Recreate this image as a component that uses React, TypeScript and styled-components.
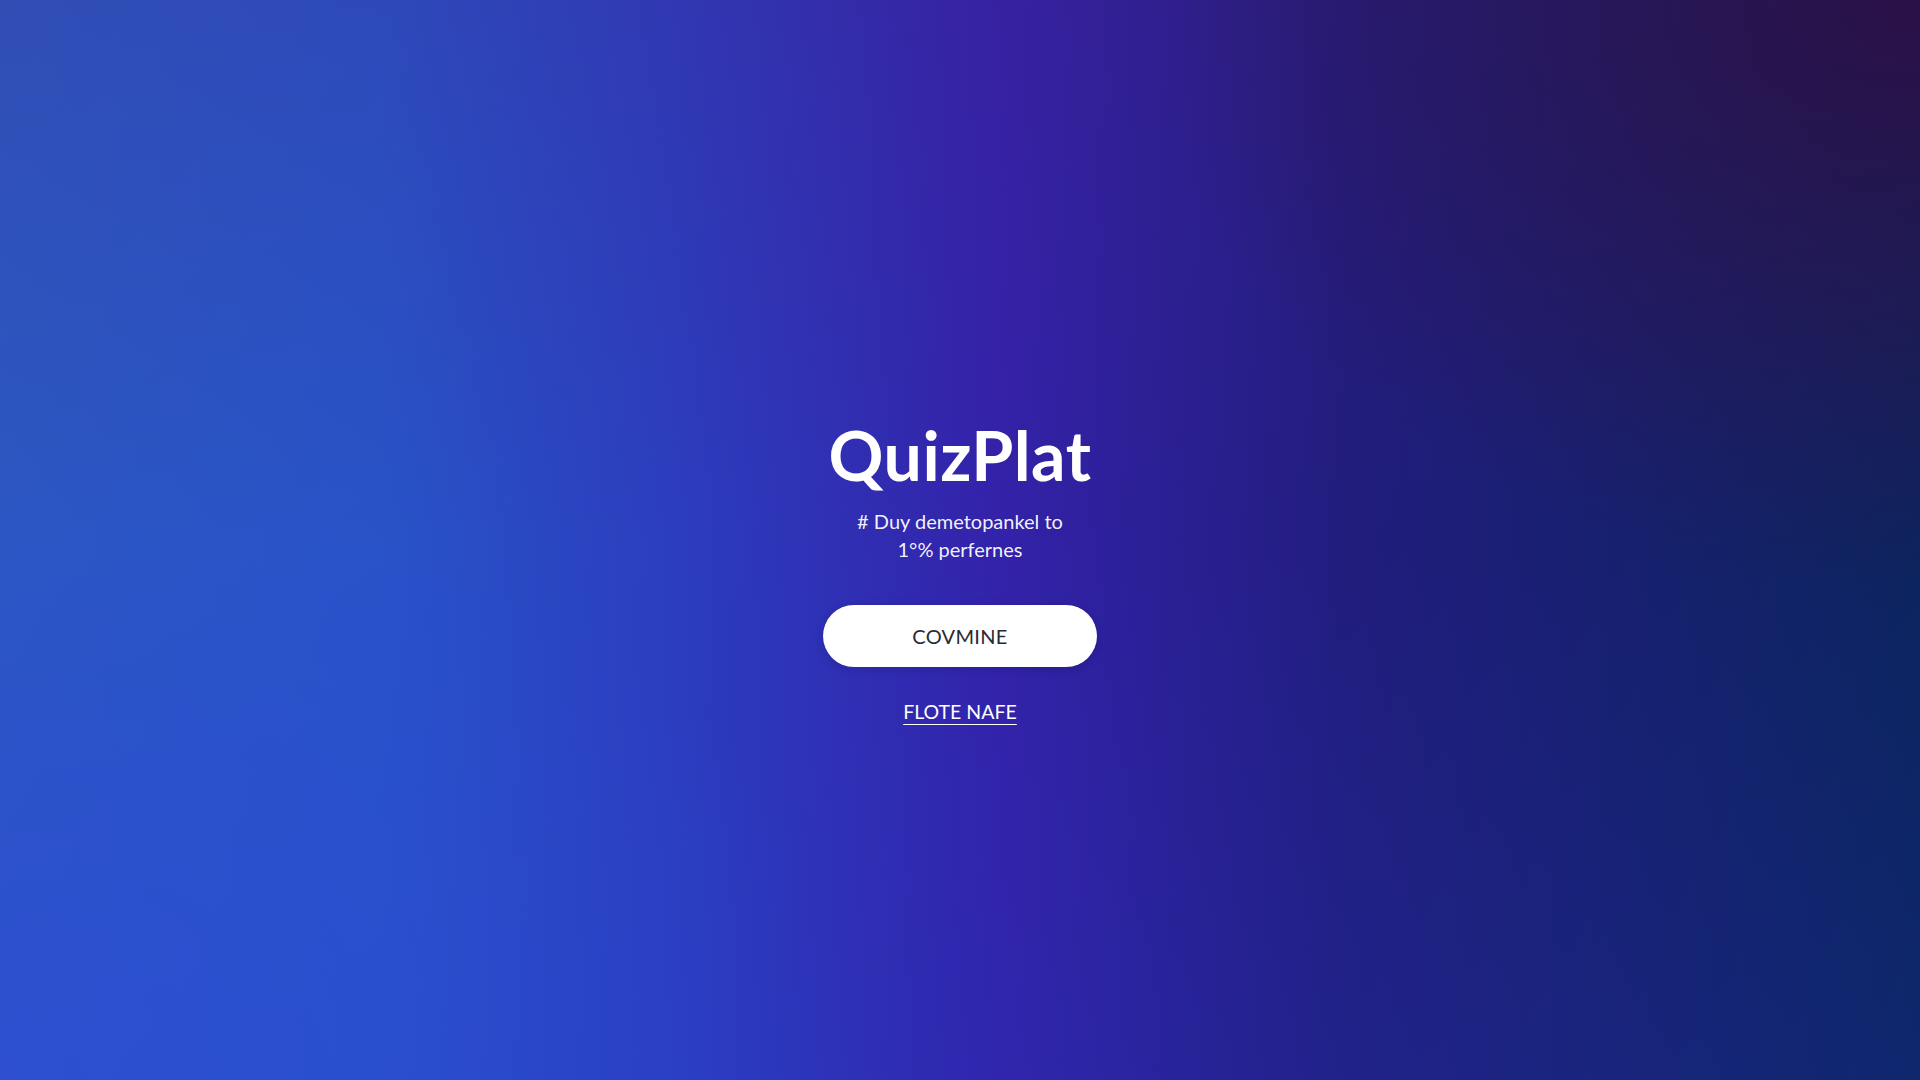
import * as React from 'react'
import styled, { createGlobalStyle } from 'styled-components'

const GlobalStyle = createGlobalStyle`
  html, body {
    margin: 0;
    padding: 0;
    height: 100%;
  }

  body {
    font-family: Lato, 'Noto Sans', sans-serif;
  }
`

const Page = styled.main`
  display: flex;
  align-items: center;
  justify-content: center;
  width: 100vw;
  height: 100vh;
  overflow: hidden;

  color: #fff;
  background:
    radial-gradient(ellipse 40% 55% at 100% 0%, rgba(46, 14, 66, 0.85), rgba(46, 14, 66, 0) 100%),
    radial-gradient(ellipse 45% 60% at 0% 100%, rgba(48, 76, 220, 0.55), rgba(48, 76, 220, 0) 100%),
    linear-gradient(180deg, rgba(70, 30, 120, 0.18) 0%, rgba(70, 30, 120, 0) 50%, rgba(30, 60, 200, 0.15) 100%),
    linear-gradient(90deg, #2c58c2 0%, #2853c8 20%, #2c3cbe 36%, #3322aa 52%, #211d7e 70%, #0c245e 100%);
`

const Hero = styled.section`
  display: flex;
  flex-direction: column;
  align-items: center;
  margin-top: 64px;
`

const Title = styled.h1`
  margin: 0;
  font-size: 68px;
  font-weight: 700;
  line-height: 1;
  letter-spacing: 0.5px;
`

const Tagline = styled.p`
  margin: 18px 0 0;
  font-size: 20px;
  line-height: 28px;
  text-align: center;
  color: rgba(255, 255, 255, 0.94);
`

const PrimaryButton = styled.button`
  display: flex;
  align-items: center;
  justify-content: center;
  width: 274px;
  height: 62px;
  margin-top: 42px;
  border: none;
  border-radius: 31px;

  font-family: Lato, 'Noto Sans', sans-serif;
  font-size: 20px;
  letter-spacing: 0.3px;
  color: #2a2a33;
  background: #fff;
  box-shadow: 0 2px 10px rgba(10, 10, 60, 0.2);
  cursor: pointer;
`

const TextLink = styled.a`
  margin-top: 33px;
  font-size: 19.5px;
  color: #fff;
  text-decoration: underline;
  text-underline-offset: 5px;
  text-decoration-thickness: 1px;
  cursor: pointer;
`

export default function App() {
  return (
    <>
      <GlobalStyle />
      <Page>
        <Hero>
          <Title>QuizPlat</Title>
          <Tagline>
            # Duy demetopankel to
            <br />
            1°% perfernes
          </Tagline>
          <PrimaryButton>COVMINE</PrimaryButton>
          <TextLink>FLOTE NAFE</TextLink>
        </Hero>
      </Page>
    </>
  )
}
